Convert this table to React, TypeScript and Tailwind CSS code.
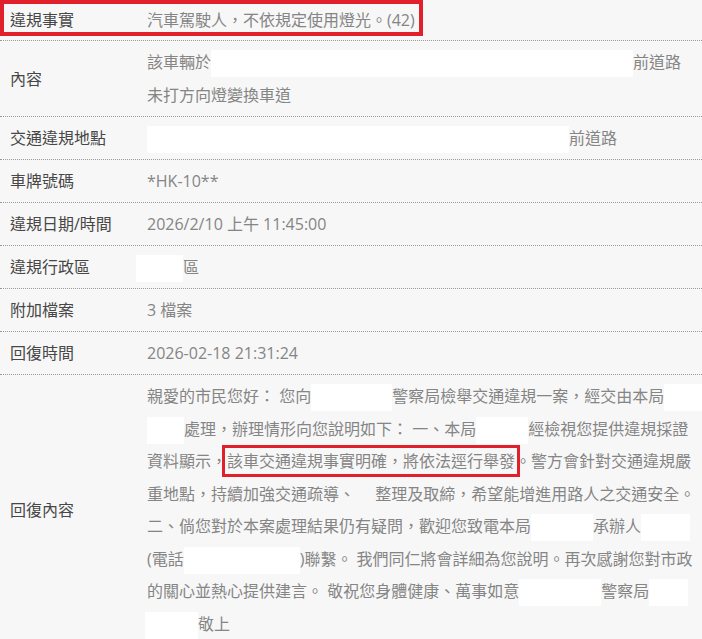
import type React from "react";

const fontStack = "font-['Open_Sans','Noto_Sans_CJK_TC',sans-serif]";

const Blank = ({ className }: { className: string }) => (
	<span className={`inline-block h-[27px] bg-white align-middle ${className}`} />
);

const Row = ({
	label,
	children,
	pad = "py-[5px]",
	leading = "leading-[32px]",
}: {
	label: string;
	children: React.ReactNode;
	pad?: string;
	leading?: string;
}) => (
	<div className="grid grid-cols-[147px_1fr] border-b border-dotted border-[#9a9a9a]">
		<div className="flex items-center pl-[10px] text-[#474747]">{label}</div>
		<div className={`${pad} ${leading} text-[#858585]`}>{children}</div>
	</div>
);

export default function App() {
	return (
		<div className={`relative min-h-[639px] w-[702px] overflow-hidden bg-[#f7f7f7] text-[16px] ${fontStack}`}>
			<Row label="違規事實" pad="py-[4px]">
				汽車駕駛人，不依規定使用燈光。(42)
			</Row>
			<Row label="內容" leading="leading-[32.5px]">
				<div className="whitespace-nowrap">
					該車輛於
					<Blank className="h-[25px] w-[422px]" />
					前道路
				</div>
				<div>未打方向燈變換車道</div>
			</Row>
			<Row label="交通違規地點">
				<Blank className="w-[422px]" />
				前道路
			</Row>
			<Row label="車牌號碼">*HK-10**</Row>
			<Row label="違規日期/時間">2026/2/10 上午 11:45:00</Row>
			<Row label="違規行政區">
				<Blank className="-ml-[11px] w-[47px]" />
				區
			</Row>
			<Row label="附加檔案">3 檔案</Row>
			<Row label="回復時間">2026-02-18 21:31:24</Row>
			<Row label="回復內容" leading="leading-[32.5px]">
				<div className="whitespace-nowrap">
					親愛的市民您好： 您向
					<Blank className="w-[81px]" />
					警察局檢舉交通違規一案，經交由本局
					<Blank className="w-[40px]" />
				</div>
				<div className="whitespace-nowrap">
					<Blank className="w-[37px]" />
					處理，辦理情形向您說明如下： 一、本局
					<Blank className="w-[52px]" />
					經檢視您提供違規採證
				</div>
				<div className="whitespace-nowrap">
					資料顯示，
					<span className="outline-3 outline-offset-2 outline-[#e0212b]">
						該車交通違規事實明確，將依法逕行舉發
					</span>
					。警方會針對交通違規嚴
				</div>
				<div className="whitespace-nowrap">重地點，持續加強交通疏導、　 整理及取締，希望能增進用路人之交通安全。</div>
				<div className="whitespace-nowrap">
					二、倘您對於本案處理結果仍有疑問，歡迎您致電本局
					<Blank className="h-[24px] w-[62px]" />
					承辦人
					<Blank className="h-[24px] w-[49px]" />
				</div>
				<div className="whitespace-nowrap">
					(電話
					<Blank className="h-[23px] w-[116px]" />
					)聯繫。 我們同仁將會詳細為您說明。再次感謝您對市政
				</div>
				<div className="whitespace-nowrap">
					的關心並熱心提供建言。 敬祝您身體健康、萬事如意
					<Blank className="h-[25px] w-[82px]" />
					警察局
					<Blank className="h-[25px] w-[39px]" />
				</div>
				<div className="whitespace-nowrap">
					<Blank className="-ml-[2px] h-[22px] w-[53px]" />
					敬上
				</div>
			</Row>
			<div className="pointer-events-none absolute left-0 top-0 h-[36px] w-[423px] border-4 border-[#e0212b]" />
		</div>
	);
}
